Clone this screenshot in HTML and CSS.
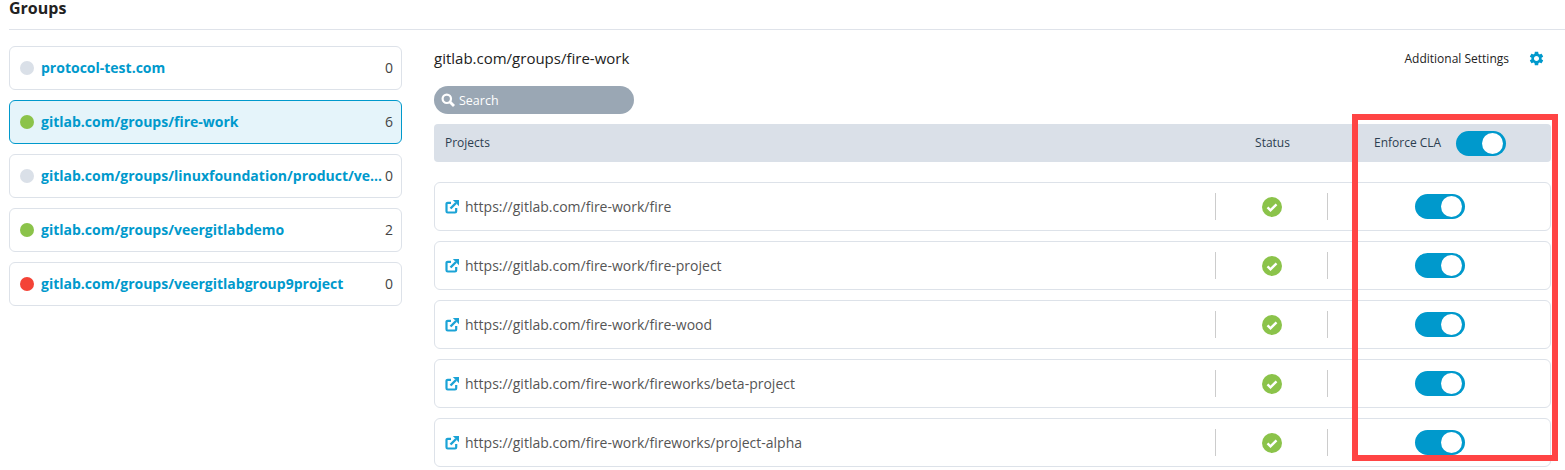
FILE: index.html
```html
<!DOCTYPE html>
<html lang="en">
<head>
    <meta charset="UTF-8">
    <title>Groups</title>
    <link rel="stylesheet" href="styles.css">
</head>
<body>
    <svg class="icon-defs" width="0" height="0">
        <symbol id="ext" viewBox="0 0 14 14">
            <path d="M11.200 8v3.300a1.200 1.200 0 0 1-1.200 1.200H2.700a1.200 1.200 0 0 1-1.200-1.200V4a1.200 1.200 0 0 1 1.200-1.200H6" fill="none" stroke="currentColor" stroke-width="2.200"/>
            <path d="M5.500 8.500L11 3" fill="none" stroke="currentColor" stroke-width="2.400"/>
            <path d="M7.800 0H14v6.200z" fill="currentColor"/>
        </symbol>
        <symbol id="ok" viewBox="0 0 20 20">
            <circle cx="10" cy="10" r="10" fill="#8bc34a"/>
            <path d="M5.500 10.300l3 3 6-6" fill="none" stroke="#fff" stroke-width="2.400"/>
        </symbol>
    </svg>

    <h1 class="page-title">Groups</h1>

    <div class="layout">
        <!-- Group list -->
        <div class="groups">
            <div class="group"><span class="dot"></span><span class="group-name">protocol-test.com</span><span class="count">0</span></div>
            <div class="group active"><span class="dot green"></span><span class="group-name">gitlab.com/groups/fire-work</span><span class="count">6</span></div>
            <div class="group"><span class="dot"></span><span class="group-name">gitlab.com/groups/linuxfoundation/product/veer/subgroup</span><span class="count">0</span></div>
            <div class="group"><span class="dot green"></span><span class="group-name">gitlab.com/groups/veergitlabdemo</span><span class="count">2</span></div>
            <div class="group"><span class="dot red"></span><span class="group-name">gitlab.com/groups/veergitlabgroup9project</span><span class="count">0</span></div>
        </div>

        <!-- Projects -->
        <div class="main">
            <div class="main-top">
                <div class="main-title">gitlab.com/groups/fire-work</div>
                <div class="settings">
                    <span>Additional Settings</span>
                    <svg class="gear" viewBox="0 0 24 24"><path fill="#0099cc" d="M19.140 12.940c.04-.3.06-.61.06-.94 0-.32-.02-.64-.07-.94l2.030-1.580c.18-.14.23-.41.12-.61l-1.920-3.320c-.12-.22-.37-.29-.59-.22l-2.390.96c-.5-.38-1.030-.7-1.620-.94l-.36-2.540c-.04-.24-.24-.41-.48-.41h-3.840c-.24 0-.43.17-.47.41l-.36 2.540c-.59.24-1.130.57-1.620.94l-2.390-.96c-.22-.08-.47 0-.59.22L2.740 8.870c-.12.21-.08.47.12.61l2.030 1.580c-.05.3-.09.63-.09.94s.02.64.07.94l-2.030 1.580c-.18.14-.23.41-.12.61l1.920 3.320c.12.22.37.29.59.22l2.390-.96c.5.38 1.030.7 1.620.94l.36 2.540c.05.24.24.41.48.41h3.840c.24 0 .44-.17.47-.41l.36-2.540c.59-.24 1.130-.56 1.620-.94l2.390.96c.22.08.47 0 .59-.22l1.920-3.320c.12-.22.07-.47-.12-.61l-2.010-1.580zM12 15.600c-1.980 0-3.600-1.620-3.600-3.600s1.620-3.600 3.600-3.600 3.600 1.620 3.600 3.600-1.620 3.600-3.600 3.600z"/></svg>
                </div>
            </div>

            <div class="search">
                <svg class="search-icon" viewBox="0 0 14 14"><circle cx="5.800" cy="5.800" r="4.200" fill="none" stroke="#fff" stroke-width="2.200"/><path d="M9 9l4 4" stroke="#fff" stroke-width="2.800"/></svg>
                <span>Search</span>
            </div>

            <div class="table-head">
                <div class="col-project">Projects</div>
                <div class="col-status">Status</div>
                <div class="col-enforce"><span>Enforce CLA</span><span class="toggle"></span></div>
            </div>

            <div class="row">
                <div class="col-project"><svg class="ext"><use href="#ext"/></svg>https://gitlab.com/fire-work/fire</div>
                <div class="col-status"><svg class="ok"><use href="#ok"/></svg></div>
                <div class="col-toggle"><span class="toggle"></span></div>
            </div>
            <div class="row">
                <div class="col-project"><svg class="ext"><use href="#ext"/></svg>https://gitlab.com/fire-work/fire-project</div>
                <div class="col-status"><svg class="ok"><use href="#ok"/></svg></div>
                <div class="col-toggle"><span class="toggle"></span></div>
            </div>
            <div class="row">
                <div class="col-project"><svg class="ext"><use href="#ext"/></svg>https://gitlab.com/fire-work/fire-wood</div>
                <div class="col-status"><svg class="ok"><use href="#ok"/></svg></div>
                <div class="col-toggle"><span class="toggle"></span></div>
            </div>
            <div class="row">
                <div class="col-project"><svg class="ext"><use href="#ext"/></svg>https://gitlab.com/fire-work/fireworks/beta-project</div>
                <div class="col-status"><svg class="ok"><use href="#ok"/></svg></div>
                <div class="col-toggle"><span class="toggle"></span></div>
            </div>
            <div class="row">
                <div class="col-project"><svg class="ext"><use href="#ext"/></svg>https://gitlab.com/fire-work/fireworks/project-alpha</div>
                <div class="col-status"><svg class="ok"><use href="#ok"/></svg></div>
                <div class="col-toggle"><span class="toggle"></span></div>
            </div>
        </div>
    </div>

    <!-- Annotation drawn over the screenshot -->
    <div class="highlight"></div>
</body>
</html>
```

FILE: styles.css
```css
html, body {
    height: 470px;
    overflow: hidden;
}

body {
    position: relative;
    margin: 0;
    background: #fff;
    font-family: "Open Sans", sans-serif;
    color: #333;
}

.icon-defs {
    position: absolute;
}

.page-title {
    margin: 0 0 0 9px;
    height: 30px;
    border-bottom: 1px solid #dfe3ea;
    box-sizing: border-box;
    font-size: 16px;
    font-weight: 700;
    line-height: 16px;
    color: #222;
}

.layout {
    display: flex;
    padding: 16px 14px 0 9px;
}

.groups {
    width: 393px;
    flex-shrink: 0;
    margin-right: 32px;
}

.group {
    display: flex;
    align-items: center;
    box-sizing: border-box;
    height: 44px;
    margin-bottom: 10px;
    padding: 0 8px 0 10px;
    border: 1px solid #dde2e9;
    border-radius: 6px;
    font-size: 14px;
}

.group.active {
    background: #e5f4fa;
    border-color: #0099cc;
}

.dot {
    width: 14px;
    height: 14px;
    flex-shrink: 0;
    margin-right: 7px;
    border-radius: 50%;
    background: #dae0e8;
}

.dot.green {
    background: #8bc34a;
}

.dot.red {
    background: #f44336;
}

.group-name {
    flex: 1;
    margin-top: -2px;
    overflow: hidden;
    white-space: nowrap;
    text-overflow: ellipsis;
    font-weight: 700;
    color: #0099cc;
}

.count {
    margin-top: -2px;
    color: #444;
}

.main {
    flex: 1;
}

.main-top {
    display: flex;
    align-items: center;
    justify-content: space-between;
    height: 24px;
}

.main-title {
    font-size: 15px;
    color: #222;
}

.settings {
    display: flex;
    align-items: center;
    font-size: 12px;
    color: #222;
}

.gear {
    width: 17px;
    height: 17px;
    margin-left: 19px;
    margin-right: 6px;
}

.search {
    display: flex;
    align-items: center;
    width: 200px;
    height: 28px;
    margin-top: 16px;
    padding-left: 7px;
    box-sizing: border-box;
    border-radius: 14px;
    background: #9aa7b4;
    font-size: 12.500px;
    color: #fff;
}

.search-icon {
    width: 14px;
    height: 14px;
    margin-right: 4px;
}

.table-head {
    display: flex;
    align-items: center;
    height: 38px;
    margin-top: 10px;
    margin-bottom: 20px;
    border-radius: 4px;
    background: #dae0e8;
    font-size: 12px;
    color: #2c3e50;
}

.table-head > div {
    margin-top: -2px;
}

.table-head .toggle {
    margin-top: 2px;
}

.row {
    display: flex;
    align-items: center;
    box-sizing: border-box;
    height: 49px;
    margin-bottom: 10px;
    border: 1px solid #dde2e9;
    border-radius: 6px;
    font-size: 14px;
    color: #555;
}

.col-project {
    display: flex;
    align-items: center;
    flex: 1;
    padding-left: 10px;
}

.table-head .col-project {
    padding-left: 11px;
}

.col-status {
    width: 113px;
    flex-shrink: 0;
    text-align: center;
}

.row .col-status {
    display: flex;
    align-items: center;
    justify-content: center;
    width: 111px;
    height: 27px;
    border-left: 1px solid #ccc;
    border-right: 1px solid #ccc;
}

.col-enforce {
    display: flex;
    align-items: center;
    width: 222px;
    flex-shrink: 0;
    padding-left: 45px;
    box-sizing: border-box;
}

.col-enforce .toggle {
    margin-left: 15px;
}

.col-toggle {
    display: flex;
    justify-content: center;
    width: 222px;
    flex-shrink: 0;
    padding-left: 2px;
    box-sizing: border-box;
}

.toggle {
    position: relative;
    display: inline-block;
    width: 50px;
    height: 25px;
    border-radius: 13px;
    background: #0099cc;
}

.toggle::after {
    content: "";
    position: absolute;
    top: 2px;
    right: 3px;
    width: 21px;
    height: 21px;
    border-radius: 50%;
    background: #fff;
}

.ext {
    width: 14px;
    height: 14px;
    margin-right: 6px;
    color: #1ba3d6;
}

.ok {
    width: 20px;
    height: 20px;
}

.highlight {
    position: absolute;
    left: 1352px;
    top: 114px;
    width: 206px;
    height: 347px;
    box-sizing: border-box;
    border: 6px solid #ff4444;
}
```
